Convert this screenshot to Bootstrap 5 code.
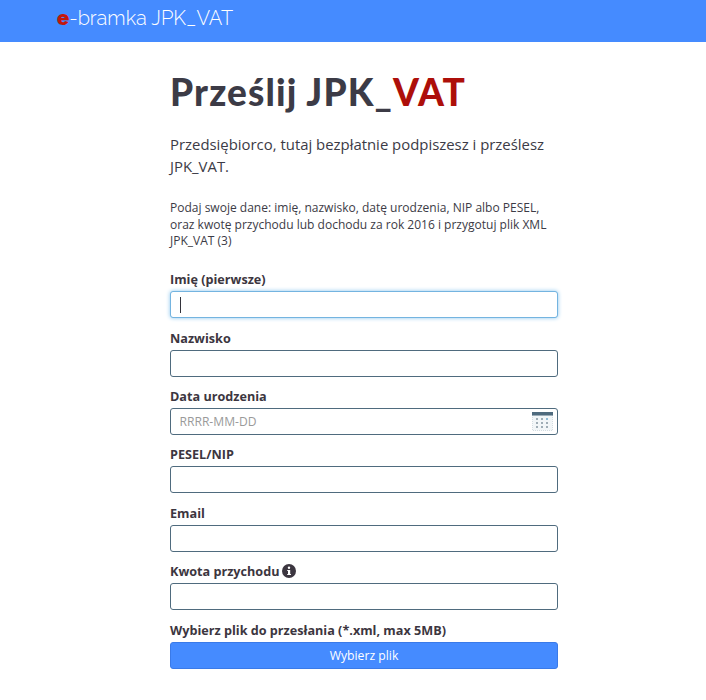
<!DOCTYPE html>
<html lang="pl">
<head>
<meta charset="utf-8">
<title>e-bramka JPK_VAT</title>
<link href="https://cdn.jsdelivr.net/npm/bootstrap@5.3.0/dist/css/bootstrap.min.css" rel="stylesheet">
<style>
html,body{height:700px;overflow:hidden;background:#fff}
body{font-family:"Open Sans",sans-serif;color:#3c3b46}
.topbar{height:42px;background:#458bff;padding-left:57px}
.brandname{font-family:Raleway,Lato,sans-serif;font-size:20px;line-height:36px;color:#fff;font-weight:300}
.brandname b{color:#c2170c;font-weight:900}
.formcol{width:388px;margin-left:170px}
.maintitle{font-family:Lato,sans-serif;font-weight:900;font-size:37px;letter-spacing:1.12px;line-height:46px;margin:27px 0 0;color:#3c3b46}
.maintitle span{color:#ad0f0a}
.leadtext{font-size:14.9px;line-height:21.5px;margin:19px 0 0}
.infotext{font-size:12.03px;line-height:16.5px;margin:23px 0 0}
.fieldset{margin-top:22.7px}
.fieldlabel{font-weight:700;font-size:12.65px;line-height:14px;margin:0 0 5px;display:flex;align-items:center;gap:3px;color:#3c3640}
.inputslot{position:relative;margin-bottom:12.4px}
.fieldinput{height:27px;border:1px solid #4f6b7e;border-radius:3px;padding:0 8.5px;font-size:12.1px;box-shadow:none}
.fieldinput.active{border-color:#74b4e0;box-shadow:0 0 4px #8cc6ee}
.fieldinput::placeholder{color:#9a9a9a}
.textcaret{position:absolute;left:10px;top:6px;width:1px;height:16px;background:#33333b}
.calicon{position:absolute;right:5px;top:4px}
.pickbtn{height:27px;background:#458bff;border:1px solid #3a7ae8;border-radius:3px;color:#fff;font-size:12.2px;padding:1px 0 0;width:100%}
</style>
</head>
<body>
<div class="topbar d-flex align-items-start"><div class="brandname"><b>e</b>-bramka JPK_VAT</div></div>
<main class="formcol">
<h1 class="maintitle">Prześlij JPK_<span>VAT</span></h1>
<p class="leadtext">Przedsiębiorco, tutaj bezpłatnie podpiszesz i prześlesz JPK_VAT.</p>
<p class="infotext">Podaj swoje dane: imię, nazwisko, datę urodzenia, NIP albo PESEL, oraz kwotę przychodu lub dochodu za rok 2016 i przygotuj plik XML JPK_VAT (3)</p>
<form class="fieldset">
<label class="fieldlabel" for="f1">Imię (pierwsze)</label>
<div class="inputslot"><input id="f1" class="form-control fieldinput active" type="text"><span class="textcaret"></span></div>
<label class="fieldlabel" for="f2">Nazwisko</label>
<div class="inputslot"><input id="f2" class="form-control fieldinput" type="text"></div>
<label class="fieldlabel" for="f3">Data urodzenia</label>
<div class="inputslot">
<input id="f3" class="form-control fieldinput" type="text" placeholder="RRRR-MM-DD">
<svg class="calicon" width="21" height="19" viewBox="0 0 21 19"><rect x=".5" y="3" width="20" height="15.5" fill="#f2f6f8" stroke="#d4dde2" stroke-dasharray="1 1"/><rect x="0" y="0" width="21" height="3.5" fill="#4f6b7e"/><g fill="#9fadb6"><rect x="4" y="6" width="2" height="2"/><rect x="9" y="6" width="2" height="2"/><rect x="14" y="6" width="2" height="2" fill="#8fbcd8"/><rect x="4" y="10" width="2" height="2"/><rect x="9" y="10" width="2" height="2"/><rect x="14" y="10" width="2" height="2"/><rect x="4" y="14" width="2" height="2"/><rect x="9" y="14" width="2" height="2"/><rect x="14" y="14" width="2" height="2"/></g></svg>
</div>
<label class="fieldlabel" for="f4">PESEL/NIP</label>
<div class="inputslot"><input id="f4" class="form-control fieldinput" type="text"></div>
<label class="fieldlabel" for="f5">Email</label>
<div class="inputslot"><input id="f5" class="form-control fieldinput" type="text"></div>
<label class="fieldlabel" for="f6">Kwota przychodu <svg width="14" height="14" viewBox="0 0 14 14"><circle cx="7" cy="7" r="7" fill="#3c3640"/><rect x="6" y="6" width="2.2" height="5" fill="#fff"/><rect x="5.2" y="6" width="2" height="1" fill="#fff"/><rect x="5.2" y="10" width="3.8" height="1" fill="#fff"/><circle cx="7" cy="3.8" r="1.2" fill="#fff"/></svg></label>
<div class="inputslot"><input id="f6" class="form-control fieldinput" type="text"></div>
<div class="fieldlabel">Wybierz plik do przesłania (*.xml, max 5MB)</div>
<button type="button" class="btn pickbtn">Wybierz plik</button>
</form>
</main>
<script src="https://cdn.jsdelivr.net/npm/bootstrap@5.3.0/dist/js/bootstrap.bundle.min.js"></script>
</body>
</html>
